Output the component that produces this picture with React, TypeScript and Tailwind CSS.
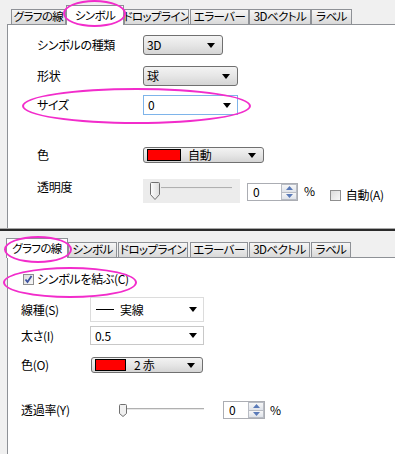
import React from 'react';

const font = "font-['MS_UI_Gothic','Noto_Sans_CJK_JP',sans-serif] [font-feature-settings:'palt'] text-[12px] leading-none tracking-[-0.3px] whitespace-nowrap text-black";

function Arrow() {
  return (
    <svg width="8" height="5" viewBox="0 0 8 5" className="shrink-0">
      <path d="M0 0h8L4 5z" fill="#000" />
    </svg>
  );
}

function Tab({ label, w, selected = false, tall = 21 }: { label: string; w: number; selected?: boolean; tall?: number }) {
  if (selected) {
    return (
      <div
        className="relative z-10 -mb-px flex items-center justify-center border border-b-0 border-[#8e9196] bg-white text-[11.5px] tracking-[-0.6px]"
        style={{ width: w, height: tall }}
      >
        {label}
      </div>
    );
  }
  return (
    <div
      className="flex h-[15px] items-center justify-center overflow-hidden border border-b-0 border-[#8e9196] bg-linear-to-b from-[#f6f6f6] to-[#d9d9d9] text-[11.5px] tracking-[-0.6px]"
      style={{ width: w }}
    >
      {label}
    </div>
  );
}

function ButtonSelect({ w, h = 20, children }: { w: number; h?: number; children: React.ReactNode }) {
  return (
    <div
      className="flex items-center justify-between rounded-[3px] border border-[#707070] bg-linear-to-b from-[#f3f3f3] via-[#e6e6e6] to-[#d5d5d5] pl-[3px] pr-[7px]"
      style={{ width: w, height: h }}
    >
      <div className="flex items-center">{children}</div>
      <Arrow />
    </div>
  );
}

function WhiteSelect({ w, h = 20, border, children }: { w: number; h?: number; border: string; children: React.ReactNode }) {
  return (
    <div
      className={`flex items-center justify-between border bg-white pl-[4px] pr-[6px] ${border}`}
      style={{ width: w, height: h }}
    >
      <div className="flex items-center">{children}</div>
      <Arrow />
    </div>
  );
}

function Thumb() {
  return (
    <svg width="10" height="18" viewBox="0 0 10 18" className="shrink-0">
      <defs>
        <linearGradient id="th" x1="0" x2="1" y1="0" y2="0">
          <stop offset="0" stopColor="#fdfdfd" />
          <stop offset="1" stopColor="#dcdcdc" />
        </linearGradient>
      </defs>
      <path d="M1.5 0.5h7a1 1 0 0 1 1 1v11l-4.5 5l-4.5-5v-11a1 1 0 0 1 1-1z" fill="url(#th)" stroke="#707070" />
    </svg>
  );
}

function SpinBox({ w, h }: { w: number; h: number }) {
  return (
    <div className="flex border border-[#abadb3] bg-white" style={{ width: w, height: h }}>
      <div className="flex flex-1 items-center pl-[5px]">0</div>
      <div className="flex w-[16px] flex-col">
        <div className="flex flex-1 items-center justify-center border border-[#b8bcc4] bg-linear-to-b from-[#f7f7f7] to-[#dfe3ea]">
          <svg width="7" height="4" viewBox="0 0 7 4"><path d="M0 4h7L3.5 0z" fill="#5a7ab8" /></svg>
        </div>
        <div className="flex flex-1 items-center justify-center border border-t-0 border-[#b8bcc4] bg-linear-to-b from-[#f7f7f7] to-[#dfe3ea]">
          <svg width="7" height="4" viewBox="0 0 7 4"><path d="M0 0h7L3.5 4z" fill="#5a7ab8" /></svg>
        </div>
      </div>
    </div>
  );
}

function Swatch({ w }: { w: number }) {
  return <div className="h-[12px] border border-black bg-[#ff0000]" style={{ width: w }} />;
}

function Ring({ cls }: { cls: string }) {
  return <div className={`pointer-events-none absolute z-20 rounded-[50%] border-2 border-[#f22ccb] ${cls}`} />;
}

function TopPanel() {
  return (
    <div className="relative flex h-[228px] flex-col">
      <div className="flex h-[24px] items-end pl-[11px]">
        <Tab label="グラフの線" w={55} />
        <Tab label="シンボル" w={58} selected tall={20} />
        <Tab label="ドロップライン" w={65} />
        <div className="w-[1px]" />
        <Tab label="エラーバー" w={59} />
        <Tab label="3Dベクトル" w={62} />
        <Tab label="ラベル" w={41} />
      </div>
      <div className="ml-[7px] flex flex-1 flex-col border-l border-t border-[#8e9196] bg-white pl-[29px] pt-[10px]">
        <div className="flex h-[20px] items-center">
          <div className="w-[106px]">シンボルの種類</div>
          <ButtonSelect w={80}>3D</ButtonSelect>
        </div>
        <div className="mt-[11px] flex h-[20px] items-center">
          <div className="w-[106px]">形状</div>
          <ButtonSelect w={95}>球</ButtonSelect>
        </div>
        <div className="mt-[9px] flex h-[20px] items-center">
          <div className="w-[106px]">サイズ</div>
          <WhiteSelect w={95} border="border-[#7eb4ea]">0</WhiteSelect>
        </div>
        <div className="mt-[32px] flex h-[16px] items-center">
          <div className="w-[106px]">色</div>
          <ButtonSelect w={121} h={16}>
            <Swatch w={34} />
            <span className="ml-[7px]">自動</span>
          </ButtonSelect>
        </div>
        <div className="mt-[16px] flex h-[24px] items-start">
          <div className="mt-[2px] w-[106px]">透明度</div>
          <div className="relative flex h-[24px] w-[97px] items-center bg-[#ececec] pl-[7px]">
            <Thumb />
            <div className="ml-[1px] mt-[-6px] h-[2px] w-[71px] border-t border-[#b0b0b0] bg-[#e8e8e8]" />
          </div>
          <div className="ml-[7px] mt-[4px]">
            <SpinBox w={51} h={18} />
          </div>
          <div className="ml-[6px] mt-[6px]">%</div>
          <div className="ml-[15px] mt-[10px] flex items-center">
            <div className="h-[11px] w-[11px] border border-[#8f8f8f] bg-linear-to-br from-[#dcdcdc] to-[#f8f8f8]" />
            <span className="ml-[5px]">自動(A)</span>
          </div>
        </div>
      </div>
      <Ring cls="left-[63px] top-[0px] h-[27px] w-[63px]" />
      <Ring cls="left-[22px] top-[88px] h-[36px] w-[229px]" />
    </div>
  );
}

function BottomPanel() {
  return (
    <div className="relative flex flex-1 flex-col">
      <div className="flex h-[26px] items-end pl-[6px]">
        <Tab label="グラフの線" w={62} selected tall={20} />
        <Tab label="シンボル" w={49} />
        <div className="w-[1px]" />
        <Tab label="ドロップライン" w={70} />
        <div className="w-[2px]" />
        <Tab label="エラーバー" w={58} />
        <div className="w-[1px]" />
        <Tab label="3Dベクトル" w={61} />
        <div className="w-[1px]" />
        <Tab label="ラベル" w={40} />
      </div>
      <div className="ml-[7px] flex flex-1 flex-col border-l border-t border-[#8e9196] bg-white pl-[13px] pt-[15px]">
        <div className="flex items-center pl-[2px]">
          <div className="relative flex h-[11px] w-[11px] items-center justify-center border border-[#8f8f8f] bg-linear-to-br from-[#dcdcdc] to-[#f8f8f8]">
            <svg width="9" height="9" viewBox="0 0 9 9">
              <path d="M1.5 4.5l2 2.5l4-6" fill="none" stroke="#3c52a0" strokeWidth="1.8" />
            </svg>
          </div>
          <span className="ml-[3px]">シンボルを結ぶ(C)</span>
        </div>
        <div className="mt-[12px] flex h-[25px] items-center">
          <div className="w-[69px]">線種(S)</div>
          <WhiteSelect w={114} h={25} border="border-[#dcdcdc]">
            <span className="ml-[1px] inline-block h-[1px] w-[18px] bg-black" />
            <span className="ml-[6px]">実線</span>
          </WhiteSelect>
        </div>
        <div className="mt-[4px] flex h-[19px] items-center">
          <div className="w-[69px]">太さ(I)</div>
          <WhiteSelect w={114} h={19} border="border-[#c8c8c8]">0.5</WhiteSelect>
        </div>
        <div className="mt-[12px] flex h-[16px] items-center">
          <div className="w-[70px]">色(O)</div>
          <ButtonSelect w={112} h={16}>
            <Swatch w={31} />
            <span className="ml-[8px]">2 赤</span>
          </ButtonSelect>
        </div>
        <div className="mt-[28px] flex h-[18px] items-center">
          <div className="w-[98px]">透過率(Y)</div>
          <div className="flex w-[85px] items-center">
            <svg width="8" height="13" viewBox="0 0 8 13" className="shrink-0">
              <path d="M1.5 0.5h5a1 1 0 0 1 1 1v8l-3.5 3l-3.5-3v-8a1 1 0 0 1 1-1z" fill="#f0f0f0" stroke="#707070" />
            </svg>
            <div className="mt-[-3px] h-[2px] w-[77px] border-t border-[#b0b0b0] bg-[#e8e8e8]" />
          </div>
          <div className="ml-[19px]">
            <SpinBox w={42} h={18} />
          </div>
          <div className="ml-[5px]">%</div>
        </div>
      </div>
      <Ring cls="left-[4px] top-[5px] h-[27px] w-[68px]" />
      <Ring cls="left-[3px] top-[36px] h-[31px] w-[134px]" />
    </div>
  );
}

export default function App() {
  return (
    <div className={`flex h-[454px] w-[395px] flex-col overflow-hidden bg-[#f0f0f0] ${font}`}>
      <TopPanel />
      <div className="h-[1px] bg-[#a8a8a8]" />
      <div className="h-[2px] bg-[#2a2a2a]" />
      <BottomPanel />
    </div>
  );
}
